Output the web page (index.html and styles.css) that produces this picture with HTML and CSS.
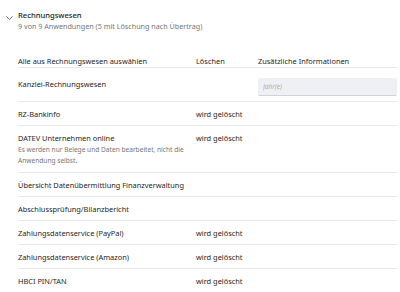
FILE: index.html
```html
<!DOCTYPE html>
<html lang="de">
<head>
  <meta charset="UTF-8" />
  <title>Rechnungswesen</title>
  <link rel="stylesheet" href="styles.css">
</head>
<body>
  <section class="group">
    <div class="group-head">
      <span class="chevron">
        <svg width="7" height="4" viewBox="0 0 7 4"><path d="M0.4 0.4 L3.5 3.4 L6.6 0.4" fill="none" stroke="#555" stroke-width="0.9"/></svg>
      </span>
      <div>
        <div class="group-title">Rechnungswesen</div>
        <div class="group-sub">9 von 9 Anwendungen (5 mit Löschung nach Übertrag)</div>
      </div>
    </div>

    <div class="app-table">
      <div class="row head">
        <div>Alle aus Rechnungswesen auswählen</div>
        <div>Löschen</div>
        <div>Zusätzliche Informationen</div>
      </div>
      <div class="row with-input">
        <div>Kanzlei-Rechnungswesen</div>
        <div></div>
        <div><input class="years" type="text" placeholder="Jahr(e)"></div>
      </div>
      <div class="row">
        <div>RZ-Bankinfo</div>
        <div>wird gelöscht</div>
        <div></div>
      </div>
      <div class="row">
        <div>DATEV Unternehmen online
          <p class="note">Es werden nur Belege und Daten bearbeitet, nicht die Anwendung selbst.</p>
        </div>
        <div>wird gelöscht</div>
        <div></div>
      </div>
      <div class="row">
        <div>Übersicht Datenübermittlung Finanzverwaltung</div>
        <div></div>
        <div></div>
      </div>
      <div class="row">
        <div>Abschlussprüfung/Bilanzbericht</div>
        <div></div>
        <div></div>
      </div>
      <div class="row">
        <div>Zahlungsdatenservice (PayPal)</div>
        <div>wird gelöscht</div>
        <div></div>
      </div>
      <div class="row">
        <div>Zahlungsdatenservice (Amazon)</div>
        <div>wird gelöscht</div>
        <div></div>
      </div>
      <div class="row">
        <div>HBCI PIN/TAN</div>
        <div>wird gelöscht</div>
        <div></div>
      </div>
    </div>
  </section>
</body>
</html>
```

FILE: styles.css
```css
/* Allgemein */
body { margin: 0; font-family: 'Noto Sans', 'Open Sans', sans-serif; font-size: 7.4px; color: #262626; background: #fff; }

/* Gruppenkopf */
.group { padding: 9px 3px 0 0; }
.group-head { display: flex; align-items: flex-start; }
.chevron { width: 18px; display: flex; justify-content: center; padding-top: 7px; padding-left: 1px; box-sizing: border-box; }
.group-title { font-size: 7.6px; font-weight: 500; line-height: 12px; color: #222; }
.group-sub { font-size: 7.2px; line-height: 11px; color: #777; }

/* Tabelle */
.app-table { margin: 24px 0 0 18px; }
.row {
  display: grid; grid-template-columns: 178px 62px 1fr;
  border-bottom: 1px solid #e9e9e9; padding: 7px 0 6px; line-height: 10px; min-height: 10px;
}
.row:last-child { border-bottom: none; }
.row.head { padding: 0 0 1px; }
.row.with-input { padding: 10px 0 5px; }
.with-input > div:first-child { padding-top: 1px; }
.note { margin: 1px 0 0; font-size: 6.6px; line-height: 11px; color: #777; max-width: 172px; }
.years {
  display: block; width: 100%; box-sizing: border-box; height: 18px;
  border: none; border-bottom: 1px solid #cdd3d9; border-radius: 2px; background: #eef0f3;
  font-family: inherit; font-size: 6.5px; padding: 0 5px;
}
.years::placeholder { color: #a9aeb4; font-style: italic; }
```
